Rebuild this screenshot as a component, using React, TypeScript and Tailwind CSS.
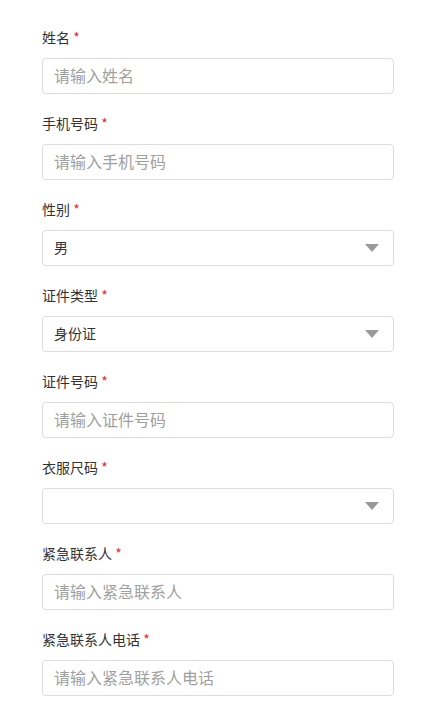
const FONT = '"Microsoft YaHei", "Noto Sans CJK SC", sans-serif'

type Field = { label: string; kind: 'input' | 'select'; value?: string; placeholder?: string }

const FIELDS: Field[] = [
  { label: '姓名', kind: 'input', placeholder: '请输入姓名' },
  { label: '手机号码', kind: 'input', placeholder: '请输入手机号码' },
  { label: '性别', kind: 'select', value: '男' },
  { label: '证件类型', kind: 'select', value: '身份证' },
  { label: '证件号码', kind: 'input', placeholder: '请输入证件号码' },
  { label: '衣服尺码', kind: 'select', value: '' },
  { label: '紧急联系人', kind: 'input', placeholder: '请输入紧急联系人' },
  { label: '紧急联系人电话', kind: 'input', placeholder: '请输入紧急联系人电话' },
]

export default function App() {
  return (
    <main className="min-h-screen bg-white" style={{ fontFamily: FONT }}>
      <div className="pl-[42px] pr-[30px] pt-[28px]">
        {FIELDS.map((f) => (
          <div key={f.label} className="mb-[20px]">
            <div className="h-[20px] leading-[18px] text-[14px] text-[#333] mb-[10px]">
              {f.label} <span className="text-[#f5222d]">*</span>
            </div>
            {f.kind === 'input' ? (
              <div className="h-[36px] w-[352px] rounded-[4px] border border-[#dcdcdc] px-[11px] pb-[3px] flex items-center text-[16px] text-[#a0a0a0]">
                {f.placeholder}
              </div>
            ) : (
              <div className="h-[36px] w-[352px] rounded-[4px] border border-[#dcdcdc] pl-[11px] pr-[14px] flex items-center justify-between text-[14px] text-[#333]">
                <span className="pb-[2px]">{f.value}</span>
                <svg width="14" height="8" viewBox="0 0 14 8">
                  <path d="M0 0 L14 0 L7 8 Z" fill="#999" />
                </svg>
              </div>
            )}
          </div>
        ))}
      </div>
    </main>
  )
}
